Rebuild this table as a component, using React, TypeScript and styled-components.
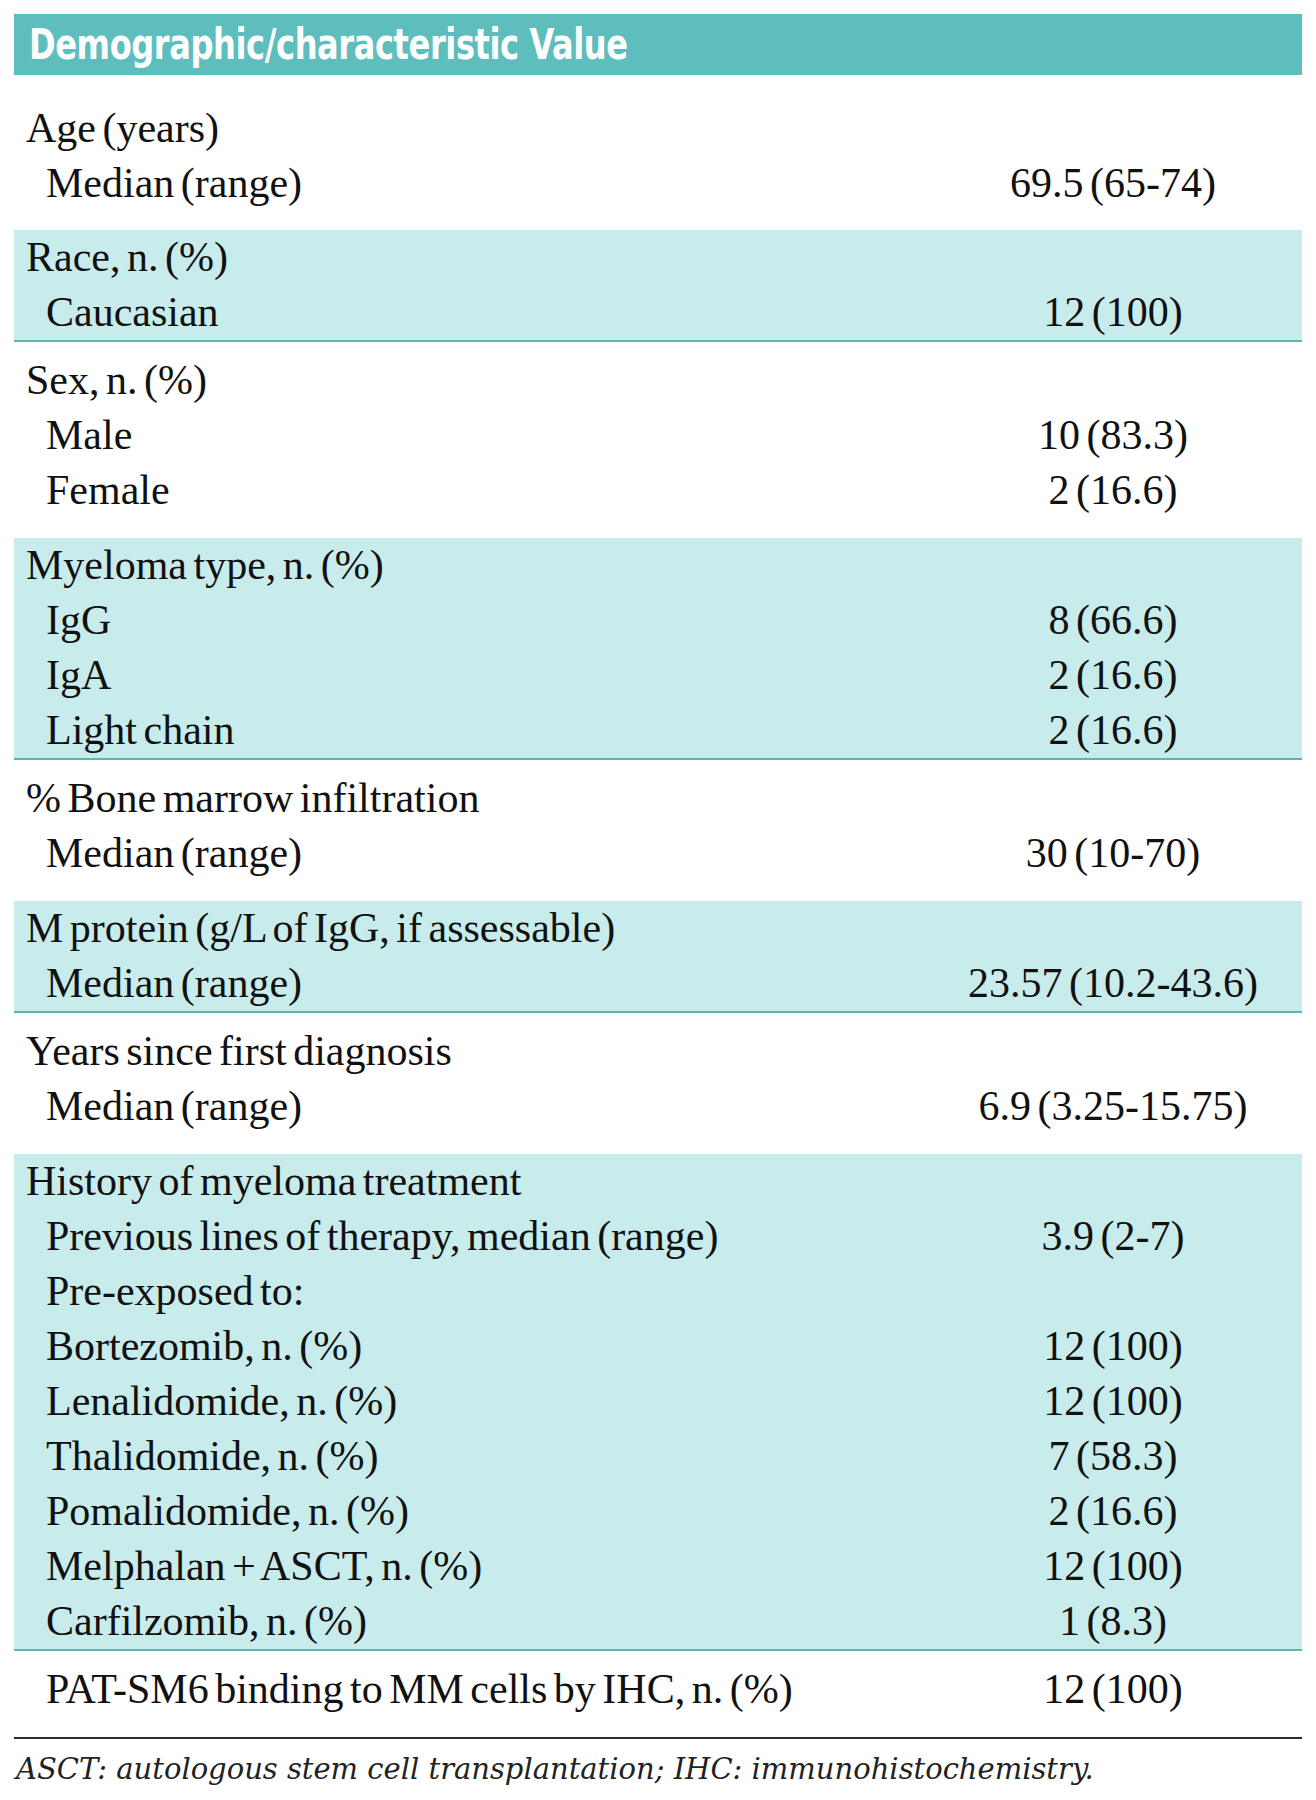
import React from 'react';
import styled, { createGlobalStyle } from 'styled-components';

const GlobalStyle = createGlobalStyle`
  html, body {
    margin: 0;
    padding: 0;
    background: #ffffff;
  }
  body {
    font-family: "Liberation Serif", "Times New Roman", serif;
    color: #111111;
  }
`;

interface RowData {
  label: string;
  sub?: boolean;
  value?: string;
}

interface SectionData {
  shaded?: boolean;
  rows: RowData[];
}

const sections: SectionData[] = [
  {
    rows: [
      { label: 'Age (years)' },
      { label: 'Median (range)', sub: true, value: '69.5 (65-74)' },
    ],
  },
  {
    shaded: true,
    rows: [
      { label: 'Race, n. (%)' },
      { label: 'Caucasian', sub: true, value: '12 (100)' },
    ],
  },
  {
    rows: [
      { label: 'Sex, n. (%)' },
      { label: 'Male', sub: true, value: '10 (83.3)' },
      { label: 'Female', sub: true, value: '2 (16.6)' },
    ],
  },
  {
    shaded: true,
    rows: [
      { label: 'Myeloma type, n. (%)' },
      { label: 'IgG', sub: true, value: '8 (66.6)' },
      { label: 'IgA', sub: true, value: '2 (16.6)' },
      { label: 'Light chain', sub: true, value: '2 (16.6)' },
    ],
  },
  {
    rows: [
      { label: '% Bone marrow infiltration' },
      { label: 'Median (range)', sub: true, value: '30 (10-70)' },
    ],
  },
  {
    shaded: true,
    rows: [
      { label: 'M protein (g/L of IgG, if assessable)' },
      { label: 'Median (range)', sub: true, value: '23.57 (10.2-43.6)' },
    ],
  },
  {
    rows: [
      { label: 'Years since first diagnosis' },
      { label: 'Median (range)', sub: true, value: '6.9 (3.25-15.75)' },
    ],
  },
  {
    shaded: true,
    rows: [
      { label: 'History of myeloma treatment' },
      { label: 'Previous lines of therapy, median (range)', sub: true, value: '3.9 (2-7)' },
      { label: 'Pre-exposed to:', sub: true },
      { label: 'Bortezomib, n. (%)', sub: true, value: '12 (100)' },
      { label: 'Lenalidomide, n. (%)', sub: true, value: '12 (100)' },
      { label: 'Thalidomide, n. (%)', sub: true, value: '7 (58.3)' },
      { label: 'Pomalidomide, n. (%)', sub: true, value: '2 (16.6)' },
      { label: 'Melphalan + ASCT, n. (%)', sub: true, value: '12 (100)' },
      { label: 'Carfilzomib, n. (%)', sub: true, value: '1 (8.3)' },
    ],
  },
  {
    rows: [
      { label: 'PAT-SM6 binding to MM cells by IHC, n. (%)', sub: true, value: '12 (100)' },
    ],
  },
];

const Page = styled.div`
  padding: 14px 14px 20px 14px;
  width: 1288px;
`;

const HeaderBar = styled.div`
  height: 61px;
  display: flex;
  align-items: center;
  padding-left: 15px;
  background-color: #5ebebe;
  color: #ffffff;
  font-family: "Liberation Sans Narrow", "DejaVu Sans Condensed", "Liberation Sans", sans-serif;
  font-weight: bold;
  font-size: 42px;
  letter-spacing: -0.5px;
  white-space: nowrap;
`;

// the original uses a condensed bold face; squeeze the available one
const HeaderText = styled.span`
  display: inline-block;
  transform: scaleX(0.85);
  transform-origin: left center;
`;

const Section = styled.div<{ $shaded?: boolean; $first?: boolean }>`
  background-color: ${(p) => (p.$shaded ? '#c8ecec' : '#ffffff')};
  border-bottom: ${(p) => (p.$shaded ? '2px solid #5ab6b1' : 'none')};
  padding: ${(p) => (p.$shaded ? '0' : p.$first ? '26px 0 19px' : '11px 0 20px')};
`;

const Row = styled.div`
  display: grid;
  grid-template-columns: 910px 378px;
  height: 55px;
  align-items: center;
  font-size: 42px;
  line-height: 55px;
  white-space: nowrap;
`;

const Label = styled.div<{ $sub?: boolean }>`
  padding-left: ${(p) => (p.$sub ? '32px' : '12px')};
  word-spacing: -4px;
`;

const Value = styled.div`
  text-align: center;
  word-spacing: -4px;
`;

const BottomRule = styled.div`
  height: 2px;
  background-color: #2b2b2b;
`;

const Footnote = styled.div`
  margin-top: 12px;
  padding-left: 2px;
  font-family: "DejaVu Serif", "Liberation Serif", serif;
  font-style: italic;
  font-size: 29px;
  line-height: 36px;
  color: #222222;
  white-space: nowrap;
`;

export default function App() {
  return (
    <>
      <GlobalStyle />
      <Page>
        <HeaderBar>
          <HeaderText>Demographic/characteristic Value</HeaderText>
        </HeaderBar>
        {sections.map((section, i) => (
          <Section key={i} $shaded={section.shaded} $first={i === 0}>
            {section.rows.map((row, j) => (
              <Row key={j}>
                <Label $sub={row.sub}>{row.label}</Label>
                <Value>{row.value}</Value>
              </Row>
            ))}
          </Section>
        ))}
        <BottomRule />
        <Footnote>ASCT: autologous stem cell transplantation; IHC: immunohistochemistry.</Footnote>
      </Page>
    </>
  );
}
